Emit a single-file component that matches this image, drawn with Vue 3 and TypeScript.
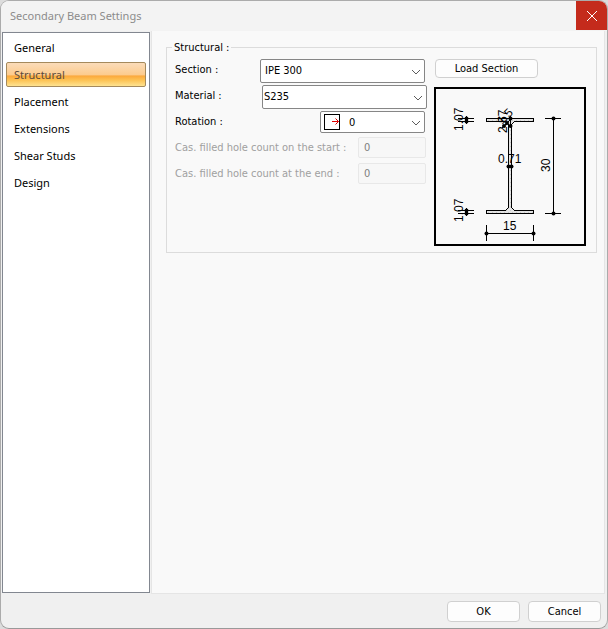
<script setup lang="ts">
import { ref } from 'vue'

const pages: string[] = ['General', 'Structural', 'Placement', 'Extensions', 'Shear Studs', 'Design']
const activePage = ref<string>('Structural')
const section = ref<string>('IPE 300')
const material = ref<string>('S235')
const rotation = ref<string>('0')
const startHoles = ref<string>('0')
const endHoles = ref<string>('0')
</script>

<template>
  <div class="window">
    <header class="titlebar">
      <h1>Secondary Beam Settings</h1>
      <button class="close" type="button" aria-label="Close">
        <svg width="12" height="12" viewBox="0 0 12 12"><path d="M1 1L11 11M11 1L1 11" /></svg>
      </button>
    </header>

    <div class="body">
      <nav class="sidebar">
        <button
          v-for="page in pages"
          :key="page"
          type="button"
          class="page"
          :class="{ active: page === activePage }"
          @click="activePage = page"
        >{{ page }}</button>
      </nav>

      <main class="content">
        <fieldset class="group">
          <legend>Structural :</legend>
          <div class="columns">
            <div class="form">
              <div class="row">
                <label for="section">Section :</label>
                <span class="combo section">
                  <select id="section" v-model="section"><option>IPE 300</option></select>
                  <svg class="chevron" width="10" height="6" viewBox="0 0 10 6"><path d="M1 1L5 5L9 1" /></svg>
                </span>
              </div>
              <div class="row">
                <label for="material">Material :</label>
                <span class="combo material">
                  <select id="material" v-model="material"><option>S235</option></select>
                  <svg class="chevron" width="10" height="6" viewBox="0 0 10 6"><path d="M1 1L5 5L9 1" /></svg>
                </span>
              </div>
              <div class="row">
                <label for="rotation">Rotation :</label>
                <span class="combo rotation">
                  <select id="rotation" v-model="rotation"><option>0</option></select>
                  <svg class="direction" width="16" height="16" viewBox="0 0 16 16">
                    <rect x="0.5" y="0.5" width="15" height="15" fill="#fff" stroke="#000" />
                    <path d="M8 7.5H14.5M11.5 4.5L14.5 7.5L11.5 10.5" fill="none" stroke="#e00000" />
                  </svg>
                  <svg class="chevron" width="10" height="6" viewBox="0 0 10 6"><path d="M1 1L5 5L9 1" /></svg>
                </span>
              </div>
              <div class="row disabled">
                <label for="start-holes">Cas. filled hole count on the start :</label>
                <input id="start-holes" v-model="startHoles" type="text" disabled />
              </div>
              <div class="row disabled">
                <label for="end-holes">Cas. filled hole count at the end :</label>
                <input id="end-holes" v-model="endHoles" type="text" disabled />
              </div>
            </div>

            <div class="preview">
              <button class="button load" type="button">Load Section</button>
              <svg class="drawing" width="148" height="155" viewBox="436 89 148 155" role="img" aria-label="Section dimensions">
                <defs>
                  <pattern id="hatch" width="4" height="4" patternUnits="userSpaceOnUse">
                    <rect width="4" height="4" fill="#e4e4e4" />
                    <path d="M0 0h1v1h-1zM2 2h1v1h-1z" fill="#c8c8c8" />
                  </pattern>
                </defs>
                <path
                  d="M486.5 118.5H533.5V121.5H514.5L511.5 124.5V207.5L514.5 210.5H533.5V213.5H486.5V210.5H505.5L508.5 207.5V124.5L505.5 121.5H486.5Z"
                  fill="url(#hatch)" stroke="#000" shape-rendering="crispEdges"
                />
                <g stroke="#000" shape-rendering="crispEdges">
                  <path d="M458 118.5H474M458 121.5H474M466.5 116V124" />
                  <path d="M458 210.5H474M458 213.5H474M466.5 208V216" />
                  <path d="M545 118.5H561M545 213.5H561M553.5 118V214" />
                  <path d="M486.5 225V241M533.5 225V241M486 233.5H534" />
                  <path d="M507 166.5H513M510.5 116V126" />
                </g>
                <path d="M502 128L510 120" stroke="#000" />
                <g>
                  <circle cx="466.5" cy="118.5" r="2" /><circle cx="466.5" cy="121.5" r="2" />
                  <circle cx="466.5" cy="210.5" r="2" /><circle cx="466.5" cy="213.5" r="2" />
                  <circle cx="553.5" cy="118.5" r="2" /><circle cx="553.5" cy="213.5" r="2" />
                  <circle cx="486.5" cy="233.5" r="2" /><circle cx="533.5" cy="233.5" r="2" />
                  <circle cx="508.5" cy="166.5" r="2" /><circle cx="511.5" cy="166.5" r="2" />
                  <circle cx="510.5" cy="118.5" r="2" /><circle cx="510.5" cy="126" r="2" />
                  <circle cx="504" cy="126" r="2" /><circle cx="507" cy="123" r="2" />
                </g>
                <g class="dimensions">
                  <text transform="translate(463 131) rotate(-90)">1.07</text>
                  <text transform="translate(463 222) rotate(-90)">1.07</text>
                  <text transform="translate(507 133) rotate(-90)">2.57</text>
                  <text transform="translate(502 125) rotate(-45)">1.5</text>
                  <text x="498" y="163">0.71</text>
                  <text transform="translate(550 172) rotate(-90)">30</text>
                  <text x="503" y="230">15</text>
                </g>
              </svg>
            </div>
          </div>
        </fieldset>
      </main>
    </div>

    <footer class="footer">
      <button class="button" type="button">OK</button>
      <button class="button" type="button">Cancel</button>
    </footer>
  </div>
</template>

<style>
body {
  margin: 0;
  background: #dcdcdc;
}
</style>

<style scoped>
* {
  box-sizing: border-box;
}

.window {
  display: flex;
  flex-direction: column;
  min-height: 100vh;
  border: 1px solid #ababab;
  border-bottom-color: #999;
  border-radius: 9px;
  overflow: hidden;
  background: #f0f0f0;
  color: #000;
  font-family: "DejaVu Sans Condensed", "DejaVu Sans", sans-serif;
  font-stretch: condensed;
  font-size: 11px;
}

button,
select,
input {
  margin: 0;
  font: inherit;
  color: inherit;
}

.titlebar {
  display: flex;
  justify-content: space-between;
  height: 30px;
  background: #f3f3f3;
}

h1 {
  margin: 0;
  padding-left: 9px;
  color: #8c8c8c;
  font: 11px/30px "Noto Sans", sans-serif;
}

.close {
  display: grid;
  place-items: center;
  width: 31px;
  height: 29px;
  padding: 0;
  border: 0;
  background: #c42b1c;
}

.close svg {
  fill: none;
  stroke: #fff;
}

.body {
  display: flex;
  flex: 1;
  gap: 1px;
  padding: 0 2px 0 1px;
}

.sidebar {
  display: flex;
  flex-direction: column;
  flex: none;
  width: 148px;
  margin: 1px 0;
  padding: 2px 3px;
  border: 1px solid #828790;
  background: #fff;
  font: 11px/24px "Noto Sans", sans-serif;
}

.page {
  height: 25px;
  margin-bottom: 2px;
  padding: 0 7px;
  border: 1px solid transparent;
  border-radius: 2px;
  background: none;
  line-height: 23px;
  text-align: left;
}

.page.active {
  border-color: #a58a5c;
  background: linear-gradient(#fbdcb9 0%, #fccb8d 52%, #fba83c 56%, #fdc355 75%, #fee391 100%);
  color: #5a4a3c;
}

.content {
  flex: 1;
  min-width: 0;
  padding: 8px 7px 8px 14px;
  border: 1px solid #e5e5e5;
  border-top: 0;
  background: #f9f9f9;
}

.group {
  min-width: 0;
  margin: 0;
  padding: 3px 9px 6px 8px;
  border: 1px solid #dcdcdc;
}

legend {
  margin-left: -3px;
  padding: 0 2px;
  line-height: 17px;
}

.columns {
  display: flex;
  gap: 7px;
}

.form {
  display: flex;
  flex-direction: column;
  gap: 2px;
  width: 252px;
}

.row {
  display: flex;
  align-items: flex-start;
  justify-content: space-between;
  height: 24px;
  line-height: 22px;
  white-space: nowrap;
}

.disabled {
  color: #a0a0a0;
}

.combo {
  position: relative;
  display: flex;
  width: 165px;
  height: 24px;
}

.combo.section,
.combo.rotation {
  margin-right: 2px;
}

.combo.rotation {
  width: 105px;
  height: 22px;
}

select {
  width: 100%;
  padding: 0 20px 0 4px;
  border: 1px solid #868686;
  border-radius: 2px;
  background: #fff;
  appearance: none;
}

.section select {
  padding-bottom: 3px;
}

.material select {
  padding-left: 1px;
}

.rotation select {
  padding-left: 28px;
}

.chevron {
  position: absolute;
  top: 50%;
  right: 4px;
  margin-top: -2px;
  fill: none;
  stroke: #5c5c5c;
  pointer-events: none;
}

.direction {
  position: absolute;
  top: 3px;
  left: 4px;
  pointer-events: none;
}

input {
  width: 68px;
  height: 21px;
  margin-right: 1px;
  padding: 0 5px;
  border: 1px solid #e8e8e8;
  border-radius: 2px;
  background: #f7f7f7;
  color: #808080;
}

.preview {
  display: flex;
  flex-direction: column;
  align-items: flex-start;
  gap: 9px;
}

.button {
  width: 73px;
  height: 21px;
  padding: 0;
  border: 1px solid #d0d0d0;
  border-radius: 4px;
  background: #fdfdfd;
}

.load {
  width: 103px;
  height: 19px;
  margin-left: 1px;
}

.drawing {
  box-sizing: content-box;
  border: 2px solid #000;
}

.dimensions {
  font: 12px "Liberation Sans", Arial, sans-serif;
}

.footer {
  display: flex;
  justify-content: flex-end;
  gap: 8px;
  padding: 7px 6px 6px;
}
</style>
